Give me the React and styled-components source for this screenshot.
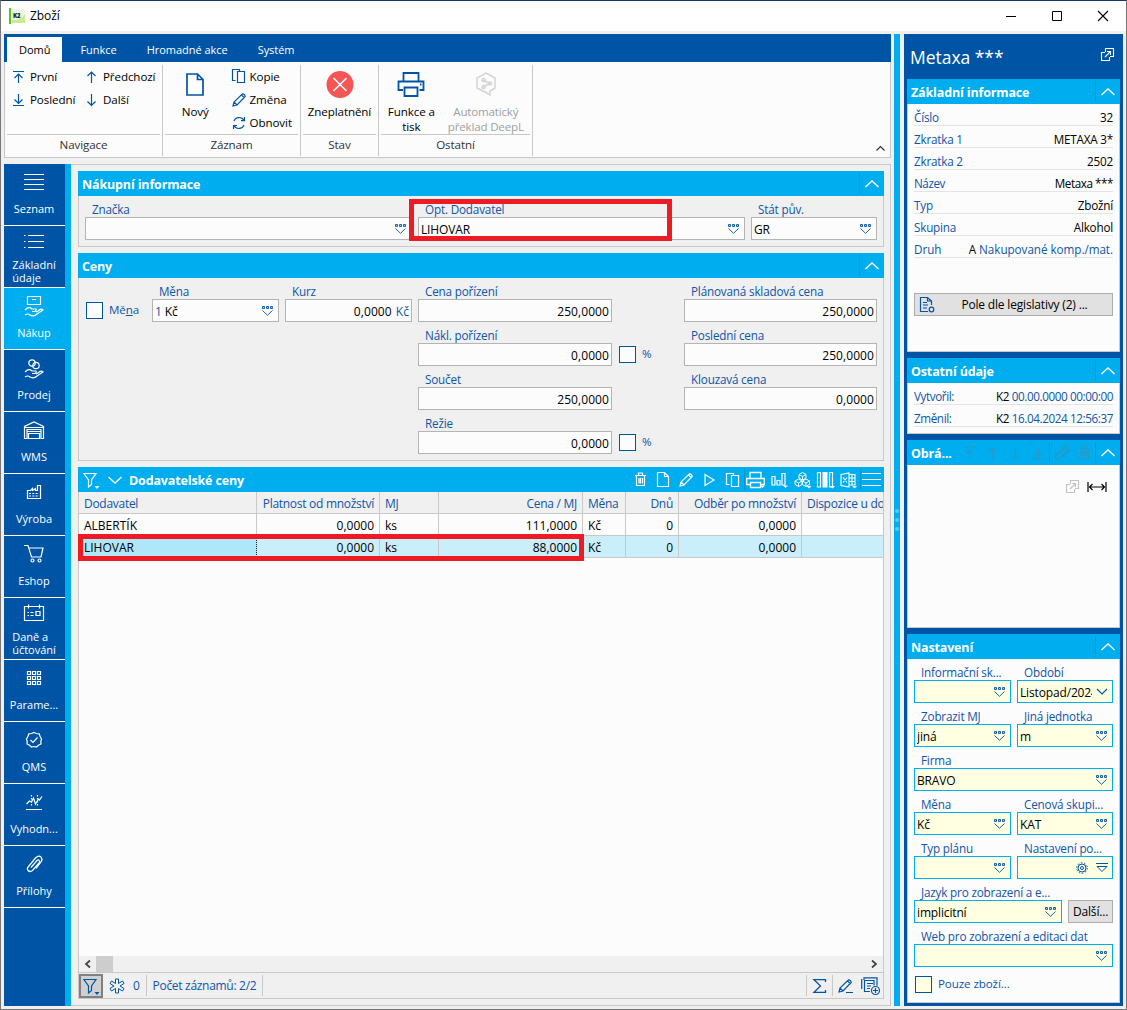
import React from "react";
import styled, { createGlobalStyle, css } from "styled-components";

const BLUE = "#0054a6";
const CYAN = "#00adef";
const LABEL = "#0f55a8";
const LINE = "#c8c8c8";

const GlobalStyle = createGlobalStyle`
  * {
    box-sizing: border-box;
  }
  body {
    margin: 0;
    background: #f0f0f0;
    color: #000;
    font: 12px/16px "Open Sans", "Noto Sans", sans-serif;
    letter-spacing: -0.1px;
  }
  svg {
    display: block;
    flex: none;
    fill: none;
    overflow: visible;
  }
`;

const Window = styled.div`
  width: 1127px;
  height: 1010px;
  display: flex;
  flex-direction: column;
  overflow: hidden;
  border: 1px solid #777;
  border-top-color: #17375e;
  background: #f0f0f0;
`;

const TitleBar = styled.header`
  height: 30px;
  flex: none;
  display: flex;
  align-items: center;
  background: #fff;
  padding: 0 17px 0 8px;
  > svg {
    margin-right: 5px;
  }
  span {
    flex: 1;
  }
`;

const WindowButtons = styled.div`
  display: flex;
  gap: 34px;
`;

const Body = styled.div`
  flex: 1;
  display: flex;
  padding: 3px;
`;

const LeftSide = styled.div`
  width: 887px;
  display: flex;
  flex-direction: column;
`;

const Tabs = styled.nav`
  height: 28px;
  display: flex;
  background: ${BLUE};
  padding: 3px 0 0 3px;
`;

const Tab = styled.div`
  padding: 5px ${({ $active }) => ($active ? "12px 0" : "15px 0")};
  font-size: 11px;
  letter-spacing: -0.03px;
  color: ${({ $active }) => ($active ? "#000" : "#fff")};
  background: ${({ $active }) => ($active ? "#fcfcfc" : "none")};
  margin-right: ${({ $active }) => ($active ? "3px" : "0")};
`;

const Ribbon = styled.div`
  height: 96px;
  display: flex;
  background: #fcfcfc;
  border: 1px solid ${LINE};
  border-top: 0;
  padding-top: 3px;
`;

const Group = styled.section`
  width: ${({ $w }) => $w}px;
  height: 91px;
  flex: none;
  display: flex;
  flex-direction: column;
  border-right: 1px solid ${LINE};
  padding: 0 2px;
  font-size: 11.6px;
`;

const GroupBody = styled.div`
  height: 70px;
  display: flex;
  border-bottom: 1px solid ${LINE};
  padding-left: ${({ $left }) => $left || 0}px;
`;

const GroupTitle = styled.div`
  text-align: center;
  color: #333;
  line-height: 19px;
`;

const CommandColumn = styled.div`
  width: ${({ $w }) => $w}px;
  margin-left: ${({ $left }) => $left || 0}px;
`;

const Command = styled.div`
  height: 23px;
  display: flex;
  align-items: center;
  gap: ${({ $gap = 5 }) => $gap}px;
  line-height: 15px;
  white-space: nowrap;
`;

const BigCommand = styled.div`
  width: ${({ $w }) => $w}px;
  display: flex;
  flex-direction: column;
  align-items: center;
  text-align: center;
  line-height: 15px;
  padding-top: 4px;
  gap: 5px;
  color: ${({ $disabled }) => ($disabled ? "#a0a0a0" : "#000")};
  letter-spacing: ${({ $disabled }) => ($disabled ? "-0.2px" : "-0.1px")};
`;

const RibbonToggle = styled.div`
  flex: 1;
  display: flex;
  justify-content: flex-end;
  align-items: flex-end;
  padding: 0 5px 6px 0;
`;

const Workspace = styled.div`
  height: 842px;
  margin-top: 6px;
  display: flex;
`;

const Sidebar = styled.aside`
  width: 67px;
  flex: none;
  background: ${BLUE};
  border-right: 6px solid ${CYAN};
`;

const SideItem = styled.div`
  height: 62px;
  display: flex;
  flex-direction: column;
  align-items: center;
  color: #fff;
  background: ${({ $active }) => ($active ? CYAN : BLUE)};
  border-bottom: 1px solid #fff;
  font-size: 11px;
  line-height: 13px;
  letter-spacing: 0;
  white-space: pre;
  padding: ${({ $two }) => ($two ? 3 : 7)}px 1px 0 0;
  gap: ${({ $two }) => ($two ? 7 : 9)}px;
`;

const Main = styled.main`
  flex: 1;
  border: 1px solid ${LINE};
  border-left: 0;
  padding: 6px 6px 6px 7px;
  min-width: 0;
`;

const Panel = styled.section`
  height: ${({ $h }) => $h}px;
  margin-bottom: ${({ $gap = 6 }) => $gap}px;
  display: flex;
  flex-direction: column;
  background: ${({ $light }) => ($light ? "#fcfcfc" : "#f0f0f0")};
`;

const PanelHeader = styled.div`
  height: 25px;
  flex: none;
  display: flex;
  align-items: center;
  background: ${CYAN};
  color: #fff;
  padding-left: 4px;
  h2 {
    flex: 1;
    min-width: 0;
    margin: 3px 0 0;
    font-size: 12.5px;
    font-weight: 700;
    letter-spacing: -0.15px;
    white-space: nowrap;
  }
`;

const Toggle = styled.div`
  height: 21px;
  width: 25px;
  display: flex;
  align-items: center;
  justify-content: center;
  border-left: 1px solid #0398d3;
`;

const PanelBody = styled.div`
  flex: 1;
  min-height: 0;
  border: 1px solid ${LINE};
  border-top: 0;
  padding: ${({ $pad }) => $pad || "5px 6px 0"};
`;

const FormRow = styled.div`
  display: grid;
  grid-template-columns: ${({ $cols }) => $cols};
  column-gap: 6px;
`;

const FieldBox = styled.div`
  min-width: 0;
  height: 44px;
  grid-column: ${({ $span }) => ($span ? `span ${$span}` : "auto")};
`;

const FieldLabel = styled.div`
  height: 16px;
  line-height: 17px;
  padding-left: 7px;
  color: ${LABEL};
  font-size: 11.7px;
  letter-spacing: -0.17px;
  white-space: nowrap;
`;

const Input = styled.div`
  height: 23px;
  display: flex;
  align-items: center;
  gap: 4px;
  border: 1px solid ${({ $side }) => ($side ? CYAN : "#b4b4b4")};
  background: ${({ $side }) => ($side ? "#ffffe1" : "#fcfcfc")};
  padding: 2px ${({ $right }) => ($right ? 2 : 4)}px 0 2px;
  letter-spacing: ${({ $right }) => ($right ? "0.08px" : "-0.15px")};
  ${({ $right }) =>
    $right &&
    css`
      justify-content: flex-end;
    `}
  svg {
    margin-top: -2px;
  }
  b {
    font-weight: 400;
    color: ${LABEL};
  }
`;

const Value = styled.span`
  flex: 1;
  min-width: 0;
  overflow: hidden;
  white-space: nowrap;
`;

const CheckRow = styled.div`
  height: 23px;
  margin-top: ${({ $top = 16 }) => $top}px;
  display: flex;
  align-items: center;
  gap: 6px;
  padding-left: 1px;
  color: ${LABEL};
  font-size: 11.6px;
  white-space: nowrap;
  span {
    margin-top: -1px;
  }
`;

const Check = styled.i`
  width: 17px;
  height: 17px;
  flex: none;
  border: 1px solid ${BLUE};
  background: ${({ $side }) => ($side ? "#ffffe1" : "#fcfcfc")};
`;

const HeaderIcons = styled.div`
  display: flex;
  align-items: center;
  gap: 8px;
  margin: 1px 7px 0 1px;
`;

const Tools = styled.div`
  display: grid;
  grid-auto-flow: column;
  grid-auto-columns: ${({ $step = 23 }) => $step}px;
  height: 21px;
  margin-right: ${({ $end = 0 }) => $end}px;
`;

const Tool = styled.div`
  display: flex;
  align-items: center;
  justify-content: center;
  border-left: 1px solid ${({ $split }) => ($split ? "#0398d3" : "transparent")};
`;

const Table = styled.div`
  border: 1px solid ${LINE};
  border-width: 0 1px;
  flex: 1;
  overflow: hidden;
`;

const TableRow = styled.div`
  height: 22px;
  line-height: 23px;
  letter-spacing: ${({ $head }) => ($head ? "-0.28px" : "0")};
  display: grid;
  grid-template-columns: 178px 123px 59px 144px 43px 53px 123px 1fr;
  color: ${({ $head }) => ($head ? LABEL : "#000")};
  background: ${({ $head, $selected }) =>
    $head ? "#f0f0f0" : $selected ? "#cbeffa" : "#fcfcfc"};
  border-bottom: 1px solid ${LINE};
`;

const Cell = styled.div`
  padding: 0 5px;
  overflow: hidden;
  white-space: nowrap;
  border-right: 1px solid ${LINE};
  text-align: ${({ $right }) => ($right ? "right" : "left")};
  ${({ $focus }) =>
    $focus &&
    css`
      background: #aee6fa;
      border-right: 1px dotted #222;
    `}
  &:last-child {
    border-right: 0;
    padding-right: 0;
  }
`;

const Scrollbar = styled.div`
  height: 17px;
  flex: none;
  display: flex;
  align-items: center;
  background: #f0f0f0;
  border: 1px solid ${LINE};
  border-width: 0 1px 1px;
  padding: 0 5px;
  i {
    width: 17px;
    height: 16px;
    margin: 0 auto 0 5px;
    background: #cdcdcd;
  }
`;

const StatusBar = styled.div`
  height: 26px;
  flex: none;
  display: flex;
  align-items: center;
  color: ${LABEL};
  background: #f0f0f0;
  border: 1px solid ${LINE};
  border-top: 0;
  letter-spacing: -0.3px;
`;

const StatusItem = styled.div`
  height: 21px;
  display: flex;
  align-items: center;
  gap: 8px;
  padding: 0 ${({ $pad = 6 }) => $pad}px;
  border-right: ${({ $last }) => ($last ? "0" : `1px solid ${LINE}`)};
`;

const FilterButton = styled.div`
  width: 24px;
  height: 24px;
  padding: 2px;
  border: 2px solid #808080;
  background: #d0d0d0;
`;

const Spacer = styled.div`
  flex: 1;
  height: 21px;
  border-right: 1px solid ${LINE};
`;

const Splitter = styled.div`
  width: 6px;
  margin: 0 4px 0 3px;
  display: flex;
  flex-direction: column;
  align-items: center;
  justify-content: center;
  gap: 5px;
  background: ${CYAN};
  i {
    width: 4px;
    height: 4px;
    border-radius: 50%;
    background: #58c8f2;
  }
`;

const InfoSide = styled.aside`
  width: 219px;
  background: ${BLUE};
  padding: 0 3px;
`;

const InfoTitle = styled.div`
  height: 45px;
  display: flex;
  align-items: center;
  justify-content: space-between;
  color: #fff;
  font-size: 17.5px;
  letter-spacing: -0.03px;
  padding: 1px 6px 0 3px;
  svg {
    margin-top: -5px;
  }
`;

const InfoRow = styled.div`
  height: 22px;
  line-height: 27px;
  display: flex;
  justify-content: space-between;
  color: ${LABEL};
  border-bottom: 1px solid #e4e4e4;
  font-size: 11.7px;
  letter-spacing: ${({ $spacing = -0.2 }) => $spacing}px;
  white-space: nowrap;
  em {
    font-style: normal;
    color: #000;
  }
`;

const PushButton = styled.div`
  height: 23px;
  margin-top: ${({ $top }) => $top}px;
  display: flex;
  align-items: center;
  border: 1px solid #adadad;
  background: #e1e1e1;
  padding-left: 4px;
  letter-spacing: -0.18px;
  white-space: nowrap;
  span {
    flex: 1;
    padding-left: 2px;
    text-align: center;
  }
`;

const ImageTools = styled.div`
  display: flex;
  justify-content: flex-end;
  align-items: center;
  gap: 8px;
`;

const Highlight = styled.div`
  position: absolute;
  left: ${({ $x }) => $x}px;
  top: ${({ $y }) => $y}px;
  width: ${({ $w }) => $w}px;
  height: ${({ $h }) => $h}px;
  border: 5px solid #ed1c24;
`;

const Svg = ({ w = 16, h = w, color = BLUE, sw = 1.2, children }) => (
  <svg
    width={w}
    height={h}
    viewBox={`0 0 ${w} ${h}`}
    stroke={color}
    strokeWidth={sw}
  >
    {children}
  </svg>
);

const Path = ({ d, ...rest }) => (
  <Svg {...rest}>
    <path d={d} />
  </Svg>
);

const ChevronUp = () => (
  <Path w={14} h={8} color="#fff" sw={1.3} d="M.5 7 7 1l6.500 6" />
);

const Picker = () => (
  <Svg w={12} h={11} sw={1} color="#1c62ad">
    <path
      d="M.500 1.500h2v2h-2zM4.500 1.500h2v2h-2zM8.500 1.500h2v2h-2z"
      fill="#a9c9e6"
    />
    <path d="M.500 5.500 5.500 10.300 10.500 5.500" />
  </Svg>
);

const Funnel = ({ color }) => (
  <Svg w={17} h={17} color={color}>
    <path d="M1 1.500h12L8.500 8v4.500L5.500 15V8z" />
    <path d="M11.500 14h5L14 17z" fill={color} stroke="none" />
  </Svg>
);

const Open = ({ color }) => (
  <Path
    w={13}
    color={color}
    sw={1.1}
    d="M4.500 4V.500h8v8H9M4 4.500H.500v8h8V9M4 9l5.500-5.500M6 3.500h3.500V7"
  />
);

const PATHS = {
  first: "M2 1.500h11M7.500 13V4M3.500 8l4-4 4 4",
  last: "M2 12.500h11M7.500 1v9M3.500 6.500l4 4 4-4",
  up: "M7.500 13V2M3.500 6l4-4 4 4",
  down: "M7.500 1v11.500M3.500 8.500l4 4 4-4",
  copy: "M5.500 2.500h7v11h-7zM3.500 11.500H.500V.500h7v2",
  pencil: "m1 13 1-4L10.500.800q2.500.200 2.700 2.700L5 12zM2 9l3 3M9.500 2l2.700 2.700",
  refresh:
    "M12 4.500A5.500 5.500 0 0 0 2 5M12.500 1v3.700H9M2 9.500A5.500 5.500 0 0 0 12 9M1.500 13V9.500H5",
  page: "M.500.500h7l4 4v10H.500zM7.500.500v4h4",
  trash: "M1 3.500h11M4.500 3V1h4v2M2.500 4v9.500h8V4M5 6v5.500M6.500 6v5.500M8.500 6v5.500",
  play: "m2 1.500 9 5.500-9 5.500z",
  clip: "m4 10 6-6q2-1.500 3 0 1 1.200-.500 3L6 13.500q-2.500 2-4.500 0-1.700-2 .500-4.500L9 2q3-2.500 5.500 0 2 2.500-.500 5l-5 5",
};

const FADED = "#239acb";

// Hand shared by the purchase and sale icons
const HAND =
  "M1 15q4-4 7-1h4q1 2-2 2.500H8M1 20q3-2 5 0 4 2 7-1l6-4q-2-2-5 1l-2 1";

const SIDE_ITEMS = [
  {
    text: "Seznam",
    icon: (
      <Path w={20} h={22} color="#fff" sw={1.2} d="M0 3.500h20M0 8.500h20M0 13.500h20M0 18.500h20" />
    ),
  },
  {
    text: "Základní\núdaje",
    two: true,
    icon: (
      <Path
        w={20}
        h={22}
        color="#fff"
        sw={1.2}
        d="M4 6.500h16M4 12.500h16M4 18.500h16M0 6.500h1.500M0 12.500h1.500M0 18.500h1.500"
      />
    ),
  },
  {
    text: "Nákup",
    active: true,
    icon: <Path w={20} h={22} color="#fff" d={`M3.500 1.500h13v8h-13zM8 4.500h4${HAND}`} />,
  },
  {
    text: "Prodej",
    icon: (
      <Svg w={20} h={22} color="#fff">
        <circle cx="8" cy="6" r="3.200" />
        <circle cx="12" cy="8.500" r="3.200" />
        <path d={HAND} />
      </Svg>
    ),
  },
  {
    text: "WMS",
    icon: (
      <Path
        w={20}
        h={22}
        color="#fff"
        d="M.500 19.500V7.500L10 3l9.500 4.500v12h-2.500v-9H3v9zM.500 8.500h19M3 12.500h14M4.500 19.500v-5h11v5z"
      />
    ),
  },
  {
    text: "Výroba",
    icon: (
      <Svg w={20} h={22} color="#fff">
        <path d="M3.500 17.500v-8h3l2-2v2l3-2v2h2v-5h3v13z" />
        <path d="M5 12.500h10M5 15h10" strokeDasharray="2 1.300" />
      </Svg>
    ),
  },
  {
    text: "Eshop",
    icon: (
      <Svg w={20} h={22} color="#fff">
        <path d="M0 2.500h4L7.500 14H17l2-9H5" />
        <circle cx="8.500" cy="17.500" r="1.500" />
        <circle cx="15.500" cy="17.500" r="1.500" />
      </Svg>
    ),
  },
  {
    text: "Daně a\núčtování",
    two: true,
    icon: (
      <Path
        w={20}
        h={22}
        color="#fff"
        d="M.500 5.500h19v14H.500zM4.500 3.500v4M15.500 3.500v4M12 10.500h4v4h-4zM3.500 11.500H5M6.500 11.500h3M3.500 14.500H5M6.500 14.500h3"
      />
    ),
  },
  {
    text: "Parame...",
    icon: (
      <Path
        w={20}
        h={22}
        color="#fff"
        d="M3.500 4.500h3v3h-3zM8.500 4.500h3v3h-3zM13.500 4.500h3v3h-3zM3.500 9.500h3v3h-3zM8.500 9.500h3v3h-3zM13.500 9.500h3v3h-3zM3.500 14.500h3v3h-3zM8.500 14.500h3v3h-3zM13.500 14.500h3v3h-3z"
      />
    ),
  },
  {
    text: "QMS",
    icon: (
      <Path
        w={20}
        h={22}
        color="#fff"
        d="m10 3.500 2.500 1 2.700.300.800 2.500L17.500 10l-.700 2.600.200 2.400-2.500 1.200L12.500 18 10 17.500 7.500 18l-2-1.800L3 15l.200-2.400L2.500 10 4 7.300l.800-2.500 2.700-.300zM6.500 11l2.500 2.500L13.500 8.500"
      />
    ),
  },
  {
    text: "Vyhodn...",
    icon: (
      <Svg w={20} h={22} color="#fff">
        <path d="M2 18.500h16M2.500 13l3-3 2 1 2-4 2 6 3-5 1 1 2.500-3.500" />
        <path d="M7.500 4v12M13.500 4v12" strokeDasharray="1.500 1.500" />
      </Svg>
    ),
  },
  {
    text: "Přílohy",
    icon: (
      <Path
        w={20}
        h={22}
        color="#fff"
        d="m7 14.500 6-7q1.500-1.200 2.300 0 .800 1-.300 2.500l-6.500 7.500q-2.500 2-4.500 0-1.500-2 .500-4L11.500 5q3-3 5.500-1 2 2.500 0 5l-5 6.500"
      />
    ),
  },
];

const HEADERS = [
  "Dodavatel",
  "Platnost od množství",
  "MJ",
  "Cena / MJ",
  "Měna",
  "Dnů",
  "Odběr po množství",
  "Dispozice u do",
];

const ROWS = [
  ["ALBERTÍK", "0,0000", "ks", "111,0000", "Kč", "0", "0,0000", ""],
  ["LIHOVAR", "0,0000", "ks", "88,0000", "Kč", "0", "0,0000", ""],
];

const RIGHT_COLUMNS = [1, 3, 5, 6];

const BASIC_INFO = [
  ["Číslo", "32"],
  ["Zkratka 1", "METAXA 3*"],
  ["Zkratka 2", "2502"],
  ["Název", "Metaxa ***", -0.45],
  ["Typ", "Zbožní"],
  ["Skupina", "Alkohol"],
];

function Field({ label, value, unit, right, picker, side, span, children }) {
  return (
    <FieldBox $span={span}>
      <FieldLabel>{label}</FieldLabel>
      <Input $right={right} $side={side}>
        {right ? <span>{value}</span> : <Value>{value}</Value>}
        {unit && <b>{unit}</b>}
        {picker && <Picker />}
        {children}
      </Input>
    </FieldBox>
  );
}

function Header({ title, children }) {
  return (
    <PanelHeader>
      <h2>{title}</h2>
      {children}
      <Toggle>
        <ChevronUp />
      </Toggle>
    </PanelHeader>
  );
}

function RibbonBar() {
  return (
    <Ribbon>
      <Group $w={158}>
        <GroupBody $left={4}>
          <CommandColumn $w={73}>
            <Command>
              <Path w={14} d={PATHS.first} /> První
            </Command>
            <Command>
              <Path w={14} d={PATHS.last} /> Poslední
            </Command>
          </CommandColumn>
          <CommandColumn $w={72}>
            <Command>
              <Path w={14} d={PATHS.up} /> Předchozí
            </Command>
            <Command>
              <Path w={14} d={PATHS.down} /> Další
            </Command>
          </CommandColumn>
        </GroupBody>
        <GroupTitle>Navigace</GroupTitle>
      </Group>
      <Group $w={138}>
        <GroupBody>
          <BigCommand $w={62}>
            <Svg w={18} h={30} sw={1.7}>
              <path d="M1 5h10.500L17 10.500V26H1zM11.500 5v5.500H17" />
            </Svg>
            Nový
          </BigCommand>
          <CommandColumn $w={68} $left={6}>
            <Command $gap={4}>
              <Path w={14} h={15} d={PATHS.copy} /> Kopie
            </Command>
            <Command $gap={4}>
              <Path w={14} d={PATHS.pencil} /> Změna
            </Command>
            <Command $gap={4}>
              <Path w={14} d={PATHS.refresh} /> Obnovit
            </Command>
          </CommandColumn>
        </GroupBody>
        <GroupTitle>Záznam</GroupTitle>
      </Group>
      <Group $w={78}>
        <GroupBody>
          <BigCommand $w={74}>
            <Svg w={28} h={30} color="#fff" sw={1.6}>
              <circle cx="14" cy="15.500" r="13.500" fill="#f55555" stroke="none" />
              <path d="m7.500 9 13 13M20.500 9l-13 13" />
            </Svg>
            Zneplatnění
          </BigCommand>
        </GroupBody>
        <GroupTitle>Stav</GroupTitle>
      </Group>
      <Group $w={154}>
        <GroupBody>
          <BigCommand $w={61}>
            <Svg w={28} h={30} sw={1.8}>
              <path d="M6.500 12V4h15v8M6 21H1.500v-8.500h25V21h-4M7.500 18.500h13V27h-13zM23 15.500h1.500" />
            </Svg>
            <span>
              Funkce a
              <br />
              tisk
            </span>
          </BigCommand>
          <BigCommand $w={89} $disabled>
            <Svg w={20} h={30} color="#d4d4d4" sw={1.5}>
              <path d="m10 4 9 5v10l-5 3v4l-4-2.500-9-4.500V9zM7.500 11l6 3.500-6 3.500" />
              <circle cx="7.500" cy="11" r="1.500" />
              <circle cx="14" cy="14.500" r="1.500" />
              <circle cx="7.500" cy="18" r="1.500" />
            </Svg>
            <span>
              Automatický
              <br />
              překlad DeepL
            </span>
          </BigCommand>
        </GroupBody>
        <GroupTitle>Ostatní</GroupTitle>
      </Group>
      <RibbonToggle>
        <Path w={9} h={5} color="#333" d="M.500 4.500l4-4 4 4" />
      </RibbonToggle>
    </Ribbon>
  );
}

function PurchasePanels() {
  return (
    <>
      <Panel $h={76}>
        <Header title="Nákupní informace" />
        <PanelBody>
          <FormRow $cols="327px 327px 126px">
            <Field label="Značka" picker />
            <Field label="Opt. Dodavatel" value="LIHOVAR" picker />
            <Field label="Stát pův." value="GR" picker />
          </FormRow>
        </PanelBody>
      </Panel>
      <Panel $h={208}>
        <Header title="Ceny" />
        <PanelBody>
          <FormRow $cols="61px 127px 127px 194px 60px 193px">
            <CheckRow>
              <Check />
              <span>
                Mě<u>n</u>a
              </span>
            </CheckRow>
            <Field
              label="Měna"
              value={
                <>
                  <b>1</b> Kč
                </>
              }
              picker
            />
            <Field label="Kurz" value="0,0000" unit="Kč" right />
            <Field label="Cena pořízení" value="250,0000" right />
            <span />
            <Field label="Plánovaná skladová cena" value="250,0000" right />
          </FormRow>
          <FormRow $cols="327px 194px 60px 193px">
            <span />
            <Field label="Nákl. pořízení" value="0,0000" right />
            <CheckRow>
              <Check />
              <span>%</span>
            </CheckRow>
            <Field label="Poslední cena" value="250,0000" right />
            <span />
            <Field label="Součet" value="250,0000" right />
            <span />
            <Field label="Klouzavá cena" value="0,0000" right />
            <span />
            <Field label="Režie" value="0,0000" right />
            <CheckRow>
              <Check />
              <span>%</span>
            </CheckRow>
          </FormRow>
        </PanelBody>
      </Panel>
    </>
  );
}

function GridTools() {
  return (
    <Tools $step={23.2} $end={1}>
      <Tool>
        <Path w={13} h={15} color="#fff" d={PATHS.trash} />
      </Tool>
      <Tool>
        <Path w={12} h={15} color="#fff" d={PATHS.page} />
      </Tool>
      <Tool>
        <Path w={14} color="#fff" d={PATHS.pencil} />
      </Tool>
      <Tool>
        <Path w={13} h={14} color="#fff" d={PATHS.play} />
      </Tool>
      <Tool>
        <Path w={13} h={14} color="#fff" d={PATHS.copy} />
      </Tool>
      <Tool $split>
        <Svg w={19} h={18} color="#fff" sw={1.3}>
          <path d="M4 7V1.500h11V7M4 13.500H.700v-6h17.600v6H15M4.500 11.500h10v5h-10z" />
          <path d="M14 14.500h5L16.500 17z" fill="#fff" stroke="none" />
        </Svg>
      </Tool>
      <Tool>
        <Svg w={17} h={18} color="#fff">
          <path d="M1 5.500h3v8.500H1zM6 9.500h3v4.500H6zM11 2.500h3v11.500h-3z" />
          <path d="M12 14.500h5L14.500 17z" fill="#fff" stroke="none" />
        </Svg>
      </Tool>
      <Tool>
        <Svg w={17} h={18} color="#fff" sw={1}>
          <path d="m8.500 1.500 3.500 2v3.500L8.500 9 5 7V3.500zM5 3.500l3.500 2 3.500-2M8.500 5.500V9M4.500 8 8 10v3.500l-3.500 2-3.500-2V10zM1 10l3.500 2L8 10M4.500 12v3.500M12 8l3.500 2v3.500l-3.500 2-3.500-2V10zM8.500 10l3.500 2 3.500-2M12 12v3.500" />
          <path d="M12.500 15h5L15 17.500z" fill="#fff" stroke="none" />
        </Svg>
      </Tool>
      <Tool>
        <Svg w={17} h={18} color="#fff">
          <path d="M.500 1.500h3v14.500h-3zM12.500 1.500h3v14.500h-3z" />
          <path d="M5.500 1h5v15.500h-5zM13 15h5l-2.500 2.500z" fill="#fff" stroke="none" />
        </Svg>
      </Tool>
      <Tool>
        <Svg w={17} h={18} color="#fff" sw={1.1}>
          <path d="M1 3.500 9 2v14l-8-1.500zM9 3.500h6v10.500H9M12 3.500v10M9 7h6M9 10.500h6M3 6.500l4 5M7 6.500l-4 5" />
          <path d="M12 15h5l-2.500 2.500z" fill="#fff" stroke="none" />
        </Svg>
      </Tool>
      <Tool $split>
        <Path w={19} h={14} color="#fff" d="M0 .500h19M0 6.500h19M0 12.500h19" />
      </Tool>
    </Tools>
  );
}

function SupplierPrices() {
  return (
    <Panel $h={532} $light>
      <PanelHeader>
        <HeaderIcons>
          <Funnel color="#fff" />
          <Path w={14} h={8} color="#fff" sw={1.3} d="m.500 1 6.500 6 6.500-6" />
        </HeaderIcons>
        <h2>Dodavatelské ceny</h2>
        <GridTools />
      </PanelHeader>
      <Table>
        <TableRow $head>
          {HEADERS.map((text, i) => (
            <Cell key={text} $right={RIGHT_COLUMNS.includes(i)}>
              {text}
            </Cell>
          ))}
        </TableRow>
        {ROWS.map((row, r) => (
          <TableRow key={row[0]} $selected={r === 1}>
            {row.map((text, i) => (
              <Cell
                key={i}
                $right={RIGHT_COLUMNS.includes(i)}
                $focus={r === 1 && i === 0}
              >
                {text}
              </Cell>
            ))}
          </TableRow>
        ))}
      </Table>
      <Scrollbar>
        <Path w={7} h={8} color="#444" sw={1.8} d="M6 .500 2 4l4 3.500" />
        <i />
        <Path w={7} h={8} color="#444" sw={1.8} d="m1 .500 4 3.500-4 3.500" />
      </Scrollbar>
      <StatusBar>
        <FilterButton>
          <Funnel color={BLUE} />
        </FilterButton>
        <StatusItem>
          <Svg w={16} h={16} sw={1}>
            <path d="M6.500 1h3v4.500L13.500 3 15 5.500 11 8l4 2.500-1.500 2.500-4-2.500V15h-3v-4.500l-4 2.500L1 10.500 5 8 1 5.500 2.500 3l4 2.500z" />
          </Svg>
          0
        </StatusItem>
        <StatusItem>Počet záznamů: 2/2</StatusItem>
        <Spacer />
        <StatusItem>
          <Path w={13} h={14} sw={1.3} d="M12.500 3V.700H1L7.500 7 1 13.300h11.500V11" />
        </StatusItem>
        <StatusItem $pad={3} $last>
          <Path w={17} h={14} d="m3 13 1-4L12.500.800q2.500.200 2.700 2.700L7 12zM4 9l3 3M11.500 2l2.700 2.700M10 13.500h7" />
          <Svg w={19} h={18}>
            <path d="M3 3V.800h13v8M9 14.500H3.500V3.500H13v5M.700 12V2M6 6.500h6M6 9h4M6 11.500h3" />
            <circle cx="14.500" cy="13.500" r="4" />
            <path d="M12 13.500h5M14.500 11v5" />
          </Svg>
        </StatusItem>
      </StatusBar>
    </Panel>
  );
}

function InfoPanels() {
  return (
    <InfoSide>
      <InfoTitle>
        Metaxa ***
        <Open color="#fff" />
      </InfoTitle>
      <Panel $h={273} $light>
        <Header title="Základní informace" />
        <PanelBody $pad="0 6px">
          {BASIC_INFO.map(([label, value, spacing]) => (
            <InfoRow key={label} $spacing={spacing}>
              {label}
              <em>{value}</em>
            </InfoRow>
          ))}
          <InfoRow $spacing={-0.05}>
            Druh
            <span>
              <em>A</em> Nakupované komp./mat.
            </span>
          </InfoRow>
          <PushButton $top={35}>
            <Svg w={16} h={17}>
              <path d="M9 15.500H1.500v-14h7L12.500 5v4M8.500 1.500V5h4M4 6.500h4M4 9h5M4 12h4" />
              <circle cx="12.500" cy="13.500" r="2.300" />
            </Svg>
            <span>Pole dle legislativy (2) ...</span>
          </PushButton>
        </PanelBody>
      </Panel>
      <Panel $h={76} $light>
        <Header title="Ostatní údaje" />
        <PanelBody $pad="0 6px">
          <InfoRow $spacing={-0.4}>
            Vytvořil:
            <span>
              <em>K2</em> 00.00.0000 00:00:00
            </span>
          </InfoRow>
          <InfoRow $spacing={-0.4}>
            Změnil:
            <span>
              <em>K2</em> 16.04.2024 12:56:37
            </span>
          </InfoRow>
        </PanelBody>
      </Panel>
      <Panel $h={188} $light>
        <Header title="Obrá...">
          <Tools>
            {["first", "up", "down", "last"].map((name) => (
              <Tool key={name}>
                <Path w={14} color={FADED} d={PATHS[name]} />
              </Tool>
            ))}
            <Tool $split>
              <Path w={15} color={FADED} d={PATHS.clip} />
            </Tool>
            <Tool>
              <Path w={13} h={15} color={FADED} d={PATHS.trash} />
            </Tool>
          </Tools>
        </Header>
        <PanelBody $pad="15px 12px">
          <ImageTools>
            <Open color="#c4c4c4" />
            <Path
              w={20}
              h={12}
              color="#000"
              d="M1 1v10M19 1v10M2 6h16M5.500 3 2.500 6l3 3M14.500 3l3 3-3 3"
            />
          </ImageTools>
        </PanelBody>
      </Panel>
      <Panel $h={369} $gap={0} $light>
        <Header title="Nastavení" />
        <PanelBody>
          <FormRow $cols="97px 45px 45px">
            <Field side label="Informační sk..." picker />
            <Field side span={2} label="Období" value="Listopad/2024">
              <Path w={12} h={7} d="m1 1 5 5 5-5" />
            </Field>
            <Field side label="Zobrazit MJ" value="jiná" picker />
            <Field side span={2} label="Jiná jednotka" value="m" picker />
            <Field side span={3} label="Firma" value="BRAVO" picker />
            <Field side label="Měna" value="Kč" picker />
            <Field side span={2} label="Cenová skupi..." value="KAT" picker />
            <Field side label="Typ plánu" picker />
            <Field side span={2} label="Nastavení po...">
              <Svg w={12} sw={1}>
                <circle cx="6" cy="6" r="4" />
                <circle cx="6" cy="6" r="1.500" />
                <circle cx="6" cy="6" r="5.300" strokeDasharray="1.600 1.700" />
              </Svg>
              <span />
              <Path w={12} h={10} sw={1} d="M0 .500h12M1 3.500h10L6 8.500z" />
            </Field>
            <Field
              side
              span={2}
              label="Jazyk pro zobrazení a e..."
              value="implicitní"
              picker
            />
            <PushButton $top={16}>Další...</PushButton>
            <Field side span={3} label="Web pro zobrazení a editaci dat" picker />
          </FormRow>
          <CheckRow $top={1}>
            <Check $side />
            <span>Pouze zboží...</span>
          </CheckRow>
        </PanelBody>
      </Panel>
    </InfoSide>
  );
}

export default function App() {
  return (
    <>
      <GlobalStyle />
      <Window>
        <TitleBar>
          <svg width="16" height="16" viewBox="0 0 16 16">
            <path d="M3 1h13v14H3z" fill="#edf5de" />
            <path d="M3 12Q12 13 16 6v9H3z" fill="#cdea8c" />
            <path d="M0 0h2v16H0z" fill="#55c51d" />
            <text
              x="4"
              y="10"
              fontSize="6"
              fontWeight="800"
              fill="#222"
              stroke="none"
              letterSpacing="0"
            >
              K2
            </text>
          </svg>
          <span>Zboží</span>
          <WindowButtons>
            <Path w={12} color="#000" sw={1} d="M1 6.500h10" />
            <Path w={12} color="#000" sw={1} d="M1.500 1.500h9v9h-9z" />
            <Path w={12} color="#000" sw={1.1} d="m1 1 10 10M11 1 1 11" />
          </WindowButtons>
        </TitleBar>
        <Body>
          <LeftSide>
            <Tabs>
              <Tab $active>Domů</Tab>
              <Tab>Funkce</Tab>
              <Tab>Hromadné akce</Tab>
              <Tab>Systém</Tab>
            </Tabs>
            <RibbonBar />
            <Workspace>
              <Sidebar>
                {SIDE_ITEMS.map(({ text, icon, active, two }) => (
                  <SideItem key={text} $active={active} $two={two}>
                    {icon}
                    {text}
                  </SideItem>
                ))}
              </Sidebar>
              <Main>
                <PurchasePanels />
                <SupplierPrices />
              </Main>
            </Workspace>
          </LeftSide>
          <Splitter>
            <i />
            <i />
            <i />
          </Splitter>
          <InfoPanels />
        </Body>
        <Highlight $x={409} $y={199} $w={263} $h={42} />
        <Highlight $x={78} $y={534} $w={506} $h={27} />
      </Window>
    </>
  );
}
